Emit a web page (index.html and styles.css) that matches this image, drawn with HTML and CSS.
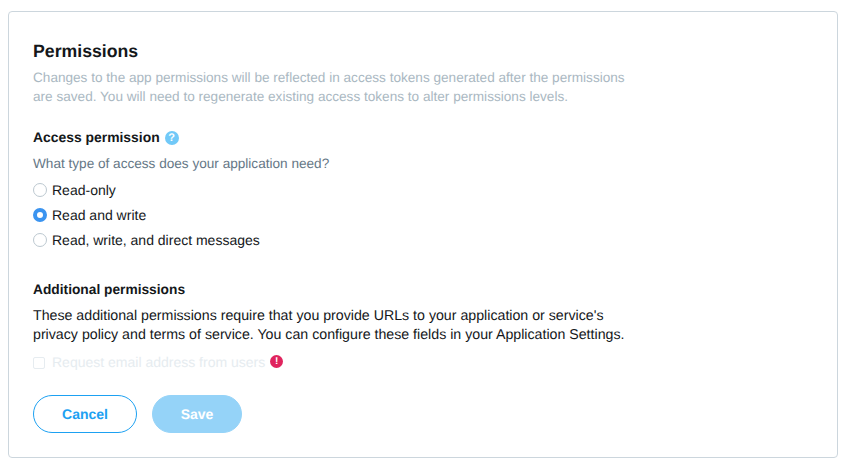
FILE: index.html
```html
<!DOCTYPE html>
<html>
<head>
    <title>Permissions</title>
    <link rel="stylesheet" href="styles.css">
</head>
<body>
<section class="card">
    <h1>Permissions</h1>
    <p class="intro">Changes to the app permissions will be reflected in access tokens generated after the permissions are saved. You will need to regenerate existing access tokens to alter permissions levels.</p>

    <h2>Access permission <span class="help">?</span></h2>
    <p class="question">What type of access does your application need?</p>
    <div class="options">
        <label class="option"><span class="radio"></span>Read-only</label>
        <label class="option"><span class="radio checked"></span>Read and write</label>
        <label class="option"><span class="radio"></span>Read, write, and direct messages</label>
    </div>

    <h2 class="additional">Additional permissions</h2>
    <p class="note">These additional permissions require that you provide URLs to your application or service's privacy policy and terms of service. You can configure these fields in your Application Settings.</p>
    <div class="email">
        <span class="checkbox"></span>
        <span class="email-label">Request email address from users</span>
        <span class="alert">!</span>
    </div>

    <div class="actions">
        <a href="#" class="button cancel">Cancel</a>
        <a href="#" class="button save">Save</a>
    </div>
</section>
</body>
</html>
```

FILE: styles.css
```css
* {
	box-sizing: border-box;
}

body {
	margin: 0;
	padding: 11px 11px 7px 8px;
	background-color: #FFFFFF;
	font-family: "Liberation Sans", Arial, sans-serif;
	font-size: 14px;
	color: #14171a;
	text-rendering: geometricPrecision;
}

.card {
	height: 447px;
	padding: 29px 24px 0;
	border: 1px solid #ccd6dd;
	border-radius: 4px;
}

h1 {
	margin: 0;
	font-size: 17.7px;
	line-height: 20px;
}

.intro {
	width: 610px;
	margin: 7px 0 0;
	font-size: 13.6px;
	line-height: 19px;
	color: #aab8c2;
}

h2 {
	display: flex;
	align-items: center;
	margin: 0;
	font-size: 13.9px;
	line-height: 20px;
}

.help {
	width: 14px;
	height: 14px;
	margin: 1px 0 0 5px;
	border-radius: 50%;
	background-color: #71c9f8;
	color: #FFFFFF;
	font-size: 11px;
	font-weight: bold;
	line-height: 14px;
	text-align: center;
}

.intro + h2 {
	margin-top: 21px;
}

.question {
	margin: 7px 0 0;
	font-size: 13.6px;
	line-height: 20px;
	color: #657786;
}

.options {
	margin-top: 3px;
}

.option {
	display: flex;
	align-items: center;
	height: 25px;
}

.radio {
	width: 14px;
	height: 14px;
	margin-right: 5px;
	border: 1px solid #bcc8d0;
	border-radius: 50%;
	background-color: #FFFFFF;
}

.radio.checked {
	border: 4.5px solid #3b94f0;
}

.additional {
	margin-top: 28px;
	font-size: 13.75px;
}

.note {
	width: 610px;
	margin: 7px 0 0;
	font-size: 14.2px;
	line-height: 19px;
}

.email {
	display: flex;
	align-items: flex-start;
	height: 20px;
	margin-top: 7px;
	color: #e6ecf0;
}

.checkbox {
	width: 12px;
	height: 12px;
	margin: 5px 7px 0 0;
	border: 1px solid #e6ecf0;
	border-radius: 2px;
}

.email-label {
	line-height: 20px;
}

.alert {
	width: 13px;
	height: 13px;
	margin: 3px 0 0 5px;
	border-radius: 50%;
	background-color: #e0245e;
	color: #FFFFFF;
	font-size: 10px;
	font-weight: bold;
	line-height: 13px;
	text-align: center;
}

.actions {
	display: flex;
	gap: 15px;
	margin-top: 23px;
}

.button {
	height: 38px;
	border-radius: 19px;
	font-size: 14px;
	font-weight: bold;
	line-height: 36px;
	text-align: center;
	text-decoration: none;
}

.cancel {
	width: 104px;
	border: 1px solid #1da1f2;
	color: #1da1f2;
}

.save {
	width: 90px;
	border: 1px solid #95d3f8;
	background-color: #95d3f8;
	color: #FFFFFF;
}
```
